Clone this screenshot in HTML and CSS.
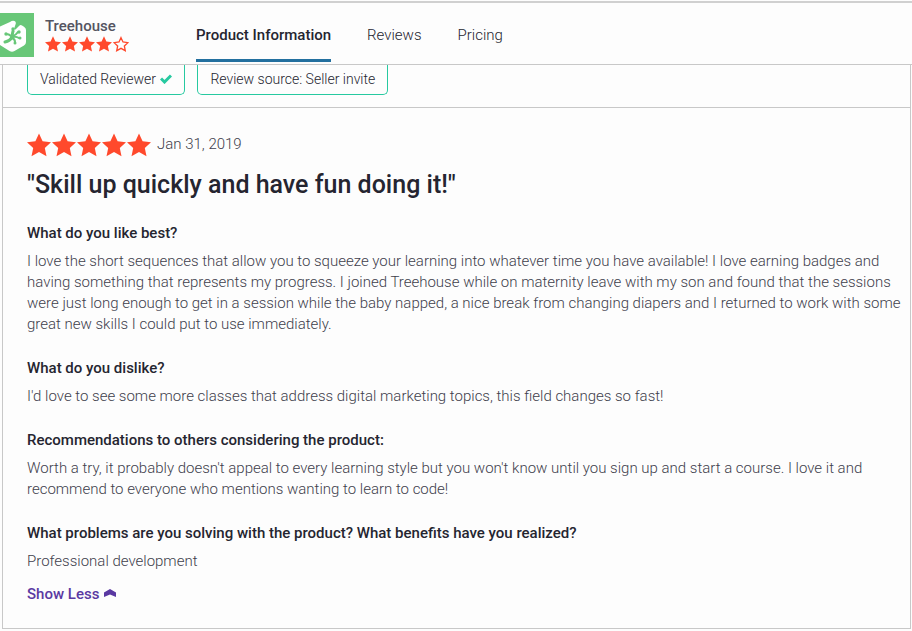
FILE: index.html
```html
<!DOCTYPE html>
<html lang="en">
<head>
    <meta charset="UTF-8">
    <title>Treehouse Reviews</title>
    <link rel="stylesheet" href="styles.css">
</head>
<body>
<svg class="sprite" aria-hidden="true">
    <symbol id="star" viewBox="0 0 24 24">
        <path d="M12 0.500l3.600 7.700 8.400 1-6.200 5.700 1.700 8.300L12 19.100 4.500 23.200l1.700-8.300L0 9.200l8.400-1z"/>
    </symbol>
    <symbol id="star-empty" viewBox="0 0 24 24">
        <path d="M12 2.500l3 6.500 7.300 1-5.300 4.900 1.400 7.100L12 18.500 5.600 22 7 14.900 1.700 10 9 9z" fill="none" stroke="currentColor" stroke-width="2"/>
    </symbol>
</svg>

<header class="product-head">
    <a class="product-logo" href="#" aria-label="Treehouse">
        <svg viewBox="0 0 44 44" width="44" height="44">
            <path fill="#68c778" d="M0 0h44v44H0z"/>
            <path fill="#fff" d="M20 9q2.500-2 4.500-1t1 3.500l-1.500 4.500q1 1 2 0l3-3q1.500-1.500 3-.5l2 1.200q2 1.200 2 3.300v12q0 2.300-2 3.500l-9.500 5.500q-2.500 1.500-5 0L10 32q-2-1.300-2-3.500V17q0-2.500 2-3.500z"/>
            <g fill="none" stroke="#68c778" stroke-width="2" stroke-linecap="round">
                <path stroke-width="3" d="M15 29q5-1 7-5"/>
                <path stroke-width="3" d="M22 23l1-5"/>
                <path d="M23 23q3-1 5-4M23 24q3-1 6 1M22 25q3 1 3 4M21 23q-2-2-5-2"/>
            </g>
            <g fill="#68c778">
                <circle cx="23" cy="16" r="1.700"/><circle cx="29" cy="19" r="1.700"/><circle cx="30" cy="25" r="1.500"/><circle cx="25" cy="30" r="1.500"/><circle cx="16" cy="21" r="1.700"/>
            </g>
        </svg>
    </a>
    <div class="product-info">
        <div class="product-name">Treehouse</div>
        <div class="stars stars-small" role="img" aria-label="4 out of 5 stars">
            <svg><use href="#star"/></svg>
            <svg><use href="#star"/></svg>
            <svg><use href="#star"/></svg>
            <svg><use href="#star"/></svg>
            <svg><use href="#star-empty"/></svg>
        </div>
    </div>
    <nav class="product-nav">
        <a class="active" href="#">Product Information</a>
        <a href="#">Reviews</a>
        <a href="#">Pricing</a>
    </nav>
</header>

<main class="review">
    <div class="review-tags">
        <span class="tag">Validated Reviewer
            <svg class="check" viewBox="0 0 12 10" width="12" height="10"><path d="M1 4.500l3.500 3.500L11 1.500" fill="none" stroke="#27c9a0" stroke-width="3"/></svg>
        </span>
        <span class="tag">Review source: Seller invite</span>
    </div>

    <article class="review-body">
        <div class="review-rating">
            <div class="stars" role="img" aria-label="5 out of 5 stars">
                <svg><use href="#star"/></svg>
                <svg><use href="#star"/></svg>
                <svg><use href="#star"/></svg>
                <svg><use href="#star"/></svg>
                <svg><use href="#star"/></svg>
            </div>
            <time datetime="2019-01-31">Jan 31, 2019</time>
        </div>
        <h2>"Skill up quickly and have fun doing it!"</h2>

        <h3>What do you like best?</h3>
        <p>I love the short sequences that allow you to squeeze your learning into whatever time you have available! I love earning badges and<br>
        having something that represents my progress. I joined Treehouse while on maternity leave with my son and found that the sessions<br>
        were just long enough to get in a session while the baby napped, a nice break from changing diapers and I returned to work with some<br>
        great new skills I could put to use immediately.</p>

        <h3>What do you dislike?</h3>
        <p>I'd love to see some more classes that address digital marketing topics, this field changes so fast!</p>

        <h3>Recommendations to others considering the product:</h3>
        <p>Worth a try, it probably doesn't appeal to every learning style but you won't know until you sign up and start a course. I love it and<br>
        recommend to everyone who mentions wanting to learn to code!</p>

        <h3>What problems are you solving with the product? What benefits have you realized?</h3>
        <p>Professional development</p>

        <button class="show-less" type="button">Show Less
            <svg viewBox="0 0 12 8" width="12" height="8"><path d="M0 3.500L6 0l6 3.500V8L6 5.500 0 8z" fill="#5a39a2"/></svg>
        </button>
    </article>
</main>
</body>
</html>
```
FILE: styles.css
```css
* {
    box-sizing: border-box;
}
body {
    margin: 0;
    padding-top: 1px;
    background-color: #fdfdfd;
    color: #40404c;
    font-family: Roboto, "Liberation Sans", sans-serif;
    font-size: 15px;
    font-weight: 300;
    line-height: 21px;
}
a {
    color: inherit;
    text-decoration: none;
}
.sprite {
    display: none;
}

/* sticky product bar */
.product-head {
    display: flex;
    height: 64px;
    border-top: 2px solid #d0d0d0;
    border-bottom: 1px solid #c8c8c8;
}
.product-logo {
    margin: 10px 11px 0 -10px;
    height: 44px;
}
.product-logo svg {
    display: block;
}
.product-info {
    width: 151px;
    padding-top: 13px;
}
.product-name {
    color: #545461;
    font-weight: 500;
    line-height: 20px;
}
.product-nav {
    display: flex;
    gap: 36px;
}
.product-nav a {
    padding-top: 22px;
    border-bottom: 3px solid transparent;
    height: 59px;
    color: #252530;
}
.product-nav .active {
    border-color: #23709f;
    font-weight: 500;
}

.stars {
    display: flex;
    gap: 1px;
    color: #ff492c;
}
.stars svg {
    width: 24px;
    height: 24px;
    fill: currentColor;
}
.stars-small svg {
    width: 16px;
    height: 16px;
}

.review {
    margin: 0 1px 0 2px;
    border: 1px solid #c8c8c8;
    border-top: 0;
    border-bottom: 0;
}
.review-tags {
    display: flex;
    gap: 12px;
    padding: 0 24px 12px;
    border-bottom: 1px solid #c8c8c8;
}
.tag {
    height: 30px;
    padding: 4px 12px 0;
    border: 1px solid #27c9a0;
    border-top: 0;
    border-radius: 0 0 5px 5px;
    font-size: 14px;
    color: #252530;
}
.check {
    margin-left: 1px;
}
.review-body {
    padding: 24px 8px 23px 24px;
    border-bottom: 1px solid #c8c8c8;
    margin-bottom: 16px;
}
.review-rating {
    display: flex;
    align-items: center;
    gap: 6px;
    height: 25px;
}
h2 {
    margin: 12px 0 22px;
    color: #252530;
    font-size: 25px;
    font-weight: 500;
    line-height: 32px;
}
h3 {
    margin: 0 0 7px;
    color: #252530;
    font-size: 15px;
    font-weight: 500;
    line-height: 21px;
}
p {
    margin: 0 0 23px;
}
.show-less {
    display: block;
    margin-top: -11px;
    padding: 0;
    border: 0;
    background: none;
    color: #5a39a2;
    font-family: inherit;
    font-size: 15px;
    font-weight: 500;
    line-height: 21px;
}
.show-less svg {
    margin-left: 1px;
    vertical-align: 2px;
}
```
